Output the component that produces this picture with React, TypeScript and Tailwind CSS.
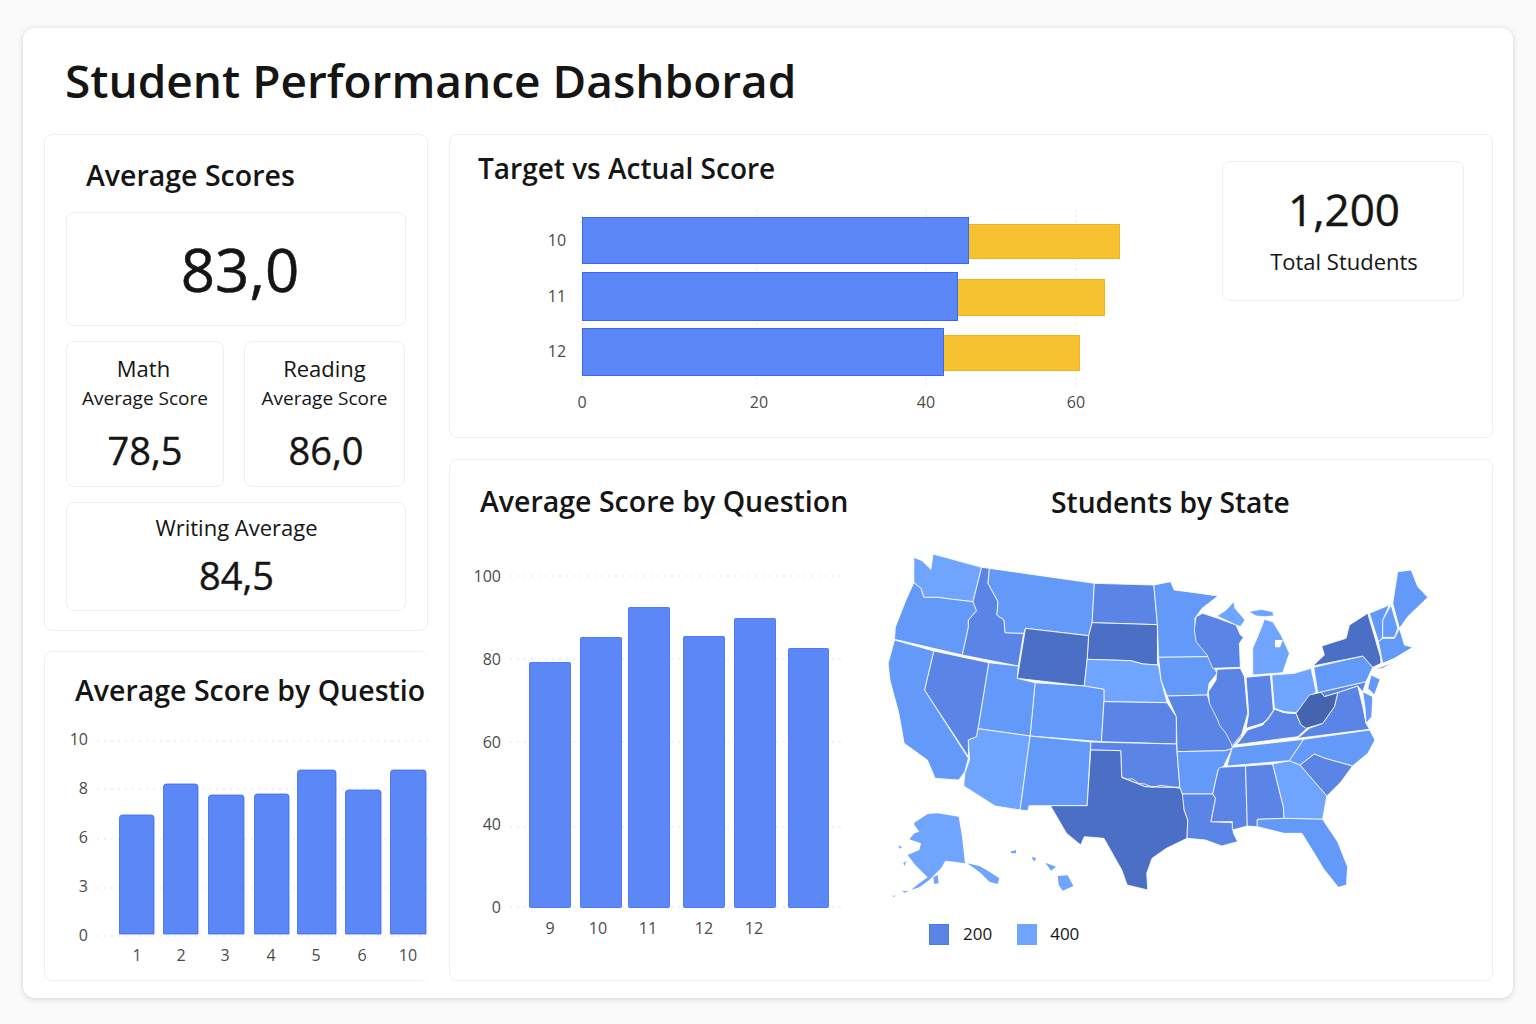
import React from "react"

const L = "#6fa4ff"
const M = "#6399f8"
const S = "#5a84e6"
const D = "#4c6fc6"
const X = "#4564b0"

// west + south, coordinates of the map crop
const states: [string, string][] = [
  [L, "M92,52 L115,62 L140,88 L146,42 L282,82 L258,185 L200,178 L160,172 L120,172 L112,145 L92,128 Z"],
  [M, "M92,128 L112,145 L120,172 L160,172 L200,178 L258,185 L268,212 L245,240 L245,262 L228,345 L38,298 L40,262 L70,180 Z"],
  [S, "M282,82 L304,85 L300,130 L328,185 L325,225 L345,240 L348,278 L400,280 L385,378 L228,345 L245,262 L245,240 L268,212 L258,185 Z"],
  [M, "M304,85 L598,130 L592,248 L582,287 L405,265 L400,280 L348,278 L345,240 L325,225 L328,185 L300,130 Z"],
  [S, "M598,130 L765,135 L775,254 L592,248 Z"],
  [D, "M592,248 L775,254 L775,375 L735,372 L700,362 L578,358 L582,287 Z"],
  [D, "M405,265 L582,287 L578,358 L570,438 L382,415 Z"],
  [L, "M578,358 L700,362 L735,372 L778,375 L785,420 L802,488 L625,485 L625,448 L570,438 Z"],
  [M, "M765,135 L812,125 L822,150 L880,158 L945,168 L900,205 L880,235 L882,295 L918,350 L778,352 L775,254 Z"],
  [M, "M778,352 L918,350 L942,400 L920,430 L915,465 L802,468 L785,420 Z"],
  [M, "M432,428 L570,438 L625,448 L625,485 L618,605 L418,588 Z"],
  [S, "M625,485 L802,488 L828,530 L828,612 L618,605 Z"],
  [S, "M802,468 L915,465 L922,490 L935,505 L945,540 L965,570 L980,590 L985,625 L965,632 L830,635 L828,530 Z"],
  [M, "M302,368 L385,378 L382,415 L432,428 L418,588 L272,566 Z"],
  [S, "M148,333 L302,368 L272,566 L268,590 L245,600 L245,650 L122,450 Z"],
  [L, "M245,600 L268,590 L272,566 L418,588 L390,810 L320,798 L232,738 L235,700 L248,660 Z"],
  [M, "M418,588 L588,606 L578,797 L470,797 L415,797 L412,812 L390,810 Z"],
  [M, "M38,300 L148,333 L122,450 L245,655 L235,695 L218,720 L152,715 L130,660 L65,610 L50,520 L25,420 L20,370 Z"],
  [S, "M588,606 L828,612 L838,742 L790,742 L740,740 L675,712 L672,632 L588,630 Z"],
  [D, "M588,630 L672,632 L675,712 L740,740 L790,742 L838,742 L848,770 L850,810 L860,840 L858,895 L800,925 L760,955 L745,1000 L748,1050 L690,1035 L675,990 L625,895 L570,890 L560,915 L520,880 L475,797 L578,797 Z"],
  [M, "M830,635 L965,632 L985,625 L960,680 L945,690 L930,762 L845,762 L838,742 Z"],
  [S, "M845,762 L930,762 L938,775 L925,845 L985,848 L988,880 L1000,905 L955,918 L910,900 L858,895 L860,840 L850,810 Z"],
  [S, "M950,682 L1022,678 L1027,858 L985,870 L985,845 L925,845 L938,775 L930,762 L945,690 Z"],
  [S, "M1022,678 L1098,672 L1128,800 L1130,835 L1055,838 L1055,860 L1027,858 Z"],
  [L, "M1098,672 L1145,662 L1175,675 L1250,768 L1238,838 L1130,835 L1128,800 Z"],
  [M, "M1055,838 L1130,835 L1238,838 L1280,905 L1308,980 L1305,1035 L1282,1042 L1240,985 L1212,935 L1180,880 L1130,880 L1055,860 Z"],
  [M, "M985,622 L1185,598 L1145,662 L970,678 Z"],
  [M, "M1185,598 L1370,570 L1385,600 L1365,640 L1322,678 L1245,655 L1215,642 L1175,675 L1145,662 Z"],
  [S, "M1175,675 L1215,642 L1245,655 L1322,678 L1290,725 L1250,768 Z"],
]

// great lakes + north east, coordinates of the second crop
const northEast: [string, string][] = [
  [S, "M45,170 L65,160 L110,175 L165,195 L178,225 L187,232 L175,250 L178,322 L95,325 L78,285 L45,245 L40,210 Z"],
  [L, "M108,168 L135,150 L158,125 L162,145 L192,180 L178,200 L165,195 Z"],
  [L, "M203,155 L240,148 L275,155 L278,168 L250,170 L225,168 Z"],
  [L, "M250,178 L275,185 L300,225 L325,280 L305,338 L215,345 L215,265 L240,205 Z"],
  [S, "M108,328 L178,325 L190,350 L200,460 L180,530 L155,560 L135,520 L115,495 L110,480 L85,430 L82,395 L105,360 Z"],
  [S, "M195,352 L268,345 L278,462 L245,490 L195,505 L203,460 Z"],
  [L, "M272,345 L340,340 L390,325 L405,395 L385,412 L345,458 L310,455 L280,445 Z"],
  [S, "M160,555 L170,550 L200,510 L245,495 L280,447 L310,458 L345,460 L360,495 L378,505 L350,530 Z"],
  [S, "M410,398 L555,365 L545,395 L530,378 L470,398 L430,410 L420,397 Z"],
  [S, "M385,505 L425,490 L460,440 L470,398 L530,378 L545,440 L555,490 L565,508 L350,535 Z"],
  [X, "M345,460 L385,405 L420,397 L430,410 L470,398 L460,440 L425,490 L375,505 L360,495 Z"],
  [M, "M398,322 L545,288 L575,322 L555,365 L410,398 Z"],
  [D, "M395,318 L430,285 L422,258 L495,235 L505,195 L560,160 L598,290 L600,310 L575,322 L545,288 Z"],
  [M, "M565,160 L625,135 L605,180 L605,232 L592,245 Z"],
  [M, "M630,135 L650,205 L640,232 L605,232 L605,180 Z"],
  [M, "M592,245 L605,235 L640,235 L655,205 L670,255 L695,262 L640,295 L605,310 L600,285 Z"],
  [M, "M650,35 L690,30 L710,80 L740,112 L680,170 L655,205 L635,130 Z"],
  [S, "M578,330 L640,305 L605,325 Z"],
  [M, "M570,345 L597,358 L580,405 L560,385 Z"],
  [M, "M545,395 L575,410 L572,470 L555,490 L552,445 Z"],
]

// alaska + hawaii, third crop
const islands = [
  "M85,68 L125,42 L155,40 L218,50 L228,110 L237,190 L205,185 L178,182 L165,205 L150,220 L130,240 L100,262 L75,270 L100,250 L125,232 L105,212 L88,195 L65,165 L100,150 L105,130 L70,118 L85,100 L100,95 L85,75 Z",
  "M243,190 L280,198 L310,215 L340,235 L335,252 L310,245 L285,220 L265,205 Z",
  "M142,232 L155,225 L158,250 L145,252 Z",
  "M36,135 L48,142 L42,146 Z",
  "M52,190 L62,182 L55,198 Z",
  "M48,274 L70,272 L55,278 Z",
  "M20,287 L32,287 L22,290 Z",
  "M515,228 L545,226 L562,258 L530,272 L518,255 Z",
  "M478,188 L510,200 L495,212 Z",
  "M438,170 L450,175 L447,183 L440,180 Z",
  "M372,155 L390,150 L390,160 L378,160 Z",
]

function UsMap() {
  return (
    <svg viewBox="0 0 1570 1080" preserveAspectRatio="none" className="w-[560px] h-[360px]">
      {states.map(([fill, d], i) => (
        <path key={i} d={d} fill={fill} stroke="#fff" strokeWidth={2.4} strokeLinejoin="round" />
      ))}
      <g transform="translate(841.2 60) scale(0.9347 1)">
        {northEast.map(([fill, d], i) => (
          <path key={i} d={d} fill={fill} stroke="#fff" strokeWidth={2.4} strokeLinejoin="round" />
        ))}
        <path d="M282,240 L305,240 L297,262 L282,262 Z" fill="#fff" />
        <path d="M155,555 L180,525 L200,505 L225,500 L245,490 L262,478 L280,447 L300,455 L325,460 L345,460" fill="none" stroke="#fff" strokeWidth={2.4} />
      </g>
      <g transform="translate(14 780) scale(0.9347 1)" fill={L}>
        {islands.map((d, i) => (
          <path key={i} d={d} />
        ))}
      </g>
      <path d="M675,712 L690,718 L705,716 L722,730 L740,732 L760,742 L785,736 L810,740 L838,745" fill="none" stroke="#fff" strokeWidth={2.4} />
    </svg>
  )
}

function TargetChart() {
  const rows = [
    { label: "10", y: 12, h: 46, blue: 386, gold: 151, ly: 36 },
    { label: "11", y: 67, h: 48, blue: 375, gold: 147, ly: 92 },
    { label: "12", y: 123, h: 47, blue: 361, gold: 136, ly: 147 },
  ]
  return (
    <svg width={620} height={215} className="ml-[80px] mt-[15px]" fontFamily="'Open Sans', sans-serif">
      {[52, 227, 396, 546].map((x) => (
        <line key={x} x1={x} x2={x} y1={4} y2={182} stroke="#e5e7eb" strokeDasharray="2 4" />
      ))}
      {rows.map((r) => (
        <g key={r.label}>
          <rect x={52.5 + r.blue} y={r.y + 7.5} width={r.gold} height={r.h - 12} fill="#f7c232" stroke="#f0b31a" />
          <rect x={52.5} y={r.y + 0.5} width={r.blue} height={r.h} fill="#5c87f6" stroke="#3a68f0" />
          <text x={27} y={r.ly + 5} textAnchor="middle" fontSize={16} fill="#4b4b4b">{r.label}</text>
        </g>
      ))}
      {[["0", 52], ["20", 229], ["40", 396], ["60", 546]].map(([t, x]) => (
        <text key={t} x={x} y={203} textAnchor="middle" fontSize={16} fill="#4b4b4b">{t}</text>
      ))}
    </svg>
  )
}

function SmallBars() {
  const bars = [
    [119, 35, 815], [163, 35, 784], [208, 36, 795], [254, 35, 794], [297, 39, 770], [345, 36, 790], [390, 36, 770],
  ]
  const base = 934
  const ox = 45
  const oy = 725
  return (
    <svg width={384} height={250} fontFamily="'Open Sans', sans-serif" className="block">
      {[739, 787, 837, 886, 934].map((y) => (
        <line key={y} x1={97 - ox} x2={384} y1={y - oy + 2} y2={y - oy + 2} stroke="#e1e3e8" strokeDasharray="2 5" />
      ))}
      {bars.map(([x, w, t], i) => (
        <path key={i} d={`M${x - ox + 0.5},${base - oy} V${t - oy + 3} q0,-3 3,-3 H${x - ox + w - 3} q3,0 3,3 V${base - oy} Z`} fill="#5c87f6" stroke="#3a68f0" strokeWidth={0.8} />
      ))}
      {[["10", 739], ["8", 788], ["6", 837], ["3", 886], ["0", 935]].map(([t, y]) => (
        <text key={t} x={43} y={Number(y) - oy + 6} fontSize={16} textAnchor="end" fill="#4b4b4b">{t}</text>
      ))}
      {[["1", 137], ["2", 181], ["3", 225], ["4", 271], ["5", 316], ["6", 362], ["10", 408]].map(([t, x]) => (
        <text key={t} x={Number(x) - ox} y={955 - oy + 6} fontSize={16} textAnchor="middle" fill="#4b4b4b">{t}</text>
      ))}
    </svg>
  )
}

function BigBars() {
  const bars = [[529, 41, 662], [580, 41, 637], [628, 41, 607], [683, 41, 636], [734, 41, 618], [788, 40, 648]]
  const ox = 450
  const oy = 560
  const base = 907
  return (
    <svg width={410} height={385} fontFamily="'Open Sans', sans-serif" className="block">
      {[576, 659, 742, 827, 907].map((y) => (
        <line key={y} x1={510 - ox} x2={845 - ox} y1={y - oy} y2={y - oy} stroke="#dfe1e6" strokeDasharray="2 5" />
      ))}
      {bars.map(([x, w, t], i) => (
        <rect key={i} x={x - ox + 0.5} y={t - oy + 0.5} width={w} height={base - t} rx={1} fill="#5c87f6" stroke="#3a68f0" strokeWidth={0.8} />
      ))}
      {[["100", 576], ["80", 659], ["60", 742], ["40", 824], ["0", 907]].map(([t, y]) => (
        <text key={t} x={51} y={Number(y) - oy + 6} textAnchor="end" fontSize={16} fill="#4b4b4b">{t}</text>
      ))}
      {[["9", 550], ["10", 598], ["11", 648], ["12", 704], ["12", 754]].map(([t, x], i) => (
        <text key={i} x={Number(x) - ox} y={928 - oy + 6} textAnchor="middle" fontSize={16} fill="#4b4b4b">{t}</text>
      ))}
    </svg>
  )
}

const box = "rounded-lg border border-[#eeeff1] bg-white"
const num = "text-[38px] leading-[50px] [-webkit-text-stroke:0.4px_#151515]"

export default function App() {
  return (
    <div className="w-[1536px] h-[1024px] bg-[#fafafa] pt-[28px] pl-[23px] text-[#151515] font-['Open_Sans',sans-serif] overflow-hidden">
      <div className="w-[1490px] h-[970px] rounded-xl bg-white shadow-[0_1px_6px_rgba(0,0,0,0.16)] pl-[21px] pr-[20px]">
        <h1 className="h-[106px] pl-[21px] pt-[19px] text-[46px] leading-[66px] font-semibold">Student Performance Dashborad</h1>
        <div className="flex gap-[21px]">
          <div className="w-[384px] flex flex-col gap-[20px]">
            <div className={`${box} h-[497px] px-[21px] pt-[20px]`}>
              <h2 className="pl-[20px] text-[28.5px] leading-[40px] font-semibold">Average Scores</h2>
              <div className={`${box} mt-[17px] h-[114px] flex items-center justify-center pl-[8px] text-[60px] [-webkit-text-stroke:0.5px_#151515]`}>83,0</div>
              <div className="mt-[15px] flex gap-[20px]">
                <div className={`${box} w-[158px] h-[146px] flex flex-col items-center pt-[11px]`}>
                  <div className="pr-[3px] text-[22px] leading-[30px]">Math</div>
                  <div className="text-[19px] leading-[30px]">Average Score</div>
                  <div className={`mt-[12px] ${num}`}>78,5</div>
                </div>
                <div className={`${box} w-[161px] h-[146px] flex flex-col items-center pt-[11px]`}>
                  <div className="text-[22px] leading-[30px]">Reading</div>
                  <div className="text-[19px] leading-[30px]">Average Score</div>
                  <div className={`mt-[12px] pl-[3px] ${num}`}>86,0</div>
                </div>
              </div>
              <div className={`${box} mt-[15px] h-[109px] flex flex-col items-center pt-[9px]`}>
                <div className="pl-[1px] text-[22px] leading-[30px]">Writing Average</div>
                <div className={`mt-[8px] pl-[1px] ${num}`}>84,5</div>
              </div>
            </div>
            <div className={`${box} h-[330px] overflow-hidden border-r-0`}>
              <h2 className="pl-[30px] pt-[18px] h-[73px] text-[28.5px] leading-[40px] font-semibold whitespace-nowrap overflow-hidden w-[382px]">Average Score by Questio</h2>
              <SmallBars />
            </div>
          </div>
          <div className="w-[1044px] flex flex-col gap-[21px]">
            <div className={`${box} h-[304px] flex justify-between pr-[28px]`}>
              <div className="pt-[11px]">
                <h2 className="pl-[28px] text-[28px] leading-[44px] font-semibold">Target vs Actual Score</h2>
                <TargetChart />
              </div>
              <div className={`${box} mt-[26px] w-[242px] h-[140px] flex flex-col items-center pt-[19px]`}>
                <div className="pl-[2px] text-[44px] leading-[56px] [-webkit-text-stroke:0.4px_#151515]">1,200</div>
                <div className="mt-[9px] pl-[2px] text-[22px] leading-[30px]">Total Students</div>
              </div>
            </div>
            <div className={`${box} h-[522px] flex`}>
              <div className="w-[431px] shrink-0">
                <h2 className="pl-[30px] pt-[21px] h-[100px] text-[28.5px] leading-[40px] font-semibold whitespace-nowrap">Average Score by Question</h2>
                <BigBars />
              </div>
              <div className="flex flex-col">
                <h2 className="pl-[170px] pt-[22px] h-[80px] text-[28.2px] leading-[40px] font-semibold whitespace-nowrap">Students by State</h2>
                <UsMap />
                <div className="mt-[23px] pl-[48px] flex items-center text-[17px] leading-[22px]">
                  <span className="w-[20px] h-[21px] bg-[#5a84e6] border border-[#4f7be8]" />
                  <span className="ml-[14px]">200</span>
                  <span className="ml-[25px] w-[20px] h-[21px] bg-[#6fa4ff]" />
                  <span className="ml-[13px]">400</span>
                </div>
              </div>
            </div>
          </div>
        </div>
      </div>
    </div>
  )
}
